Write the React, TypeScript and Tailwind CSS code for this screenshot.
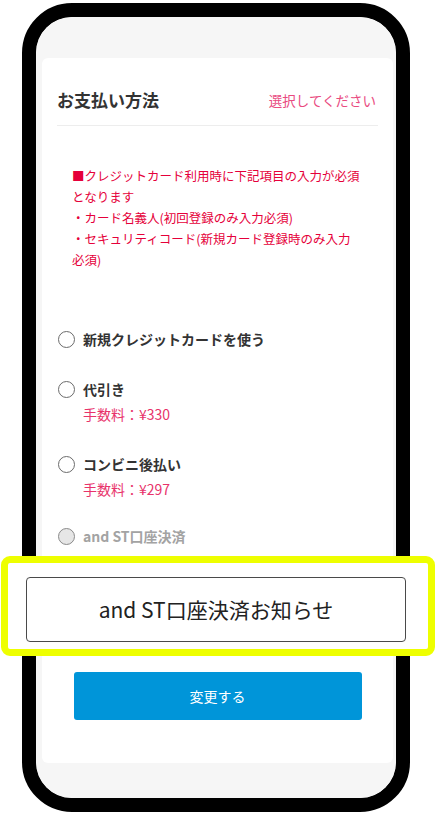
import React from "react";

const jp = { fontFamily: '"Noto Sans CJK JP", "Noto Sans", sans-serif' };

function Radio({ disabled }: { disabled?: boolean }) {
  return (
    <span
      className={`block w-[17px] h-[17px] rounded-full border shrink-0 ${
        disabled ? "border-[#8a8a8a] bg-[#e6e6e6]" : "border-[#6b6b6b] bg-white"
      }`}
    />
  );
}

function Option({ label, fee, disabled, className }: { label: string; fee?: string; disabled?: boolean; className?: string }) {
  return (
    <div className={`flex flex-col ${className ?? ""}`}>
      <div className="flex items-center h-[20px]">
        <div className="w-[25px] flex">
          <Radio disabled={disabled} />
        </div>
        <span
          className={`text-[14px] font-bold leading-[20px] ${disabled ? "text-[#a3a3a3]" : "text-[#333333]"}`}
        >
          {label}
        </span>
      </div>
      {fee && (
        <div className="pl-[25px] mt-[5px] text-[14px] leading-[20px] text-[#e8336b]">{fee}</div>
      )}
    </div>
  );
}

export default function App() {
  return (
    <div className="relative w-[436px] h-[816px] bg-white overflow-hidden" style={jp}>
      <div className="ml-[22px] mt-[3px] w-[388px] h-[809px] rounded-[50px] border-[14px] border-black bg-[#f6f6f6] overflow-hidden">
        <div className="h-full rounded-[36px] overflow-hidden bg-[#f6f6f6] pt-[41px] pl-[6px] pr-[3px]">
          <div className="bg-white rounded-[6px] h-[705px] px-[15px] pt-[31px]">
            <div className="flex items-center justify-between h-[22px]">
              <span className="text-[17px] font-bold text-[#333333]">お支払い方法</span>
              <span className="text-[13.5px] text-[#e94a7f] mr-[2px]">選択してください</span>
            </div>
            <div className="mt-[14px] h-px bg-[#ededed]" />
            <div className="mt-[39px] pl-[15px] pr-[18px] text-[12.5px] leading-[21px] text-[#e5003a]">
              <p>■クレジットカード利用時に下記項目の入力が必須となります</p>
              <p>・カード名義人(初回登録のみ入力必須)</p>
              <p>・セキュリティコード(新規カード登録時のみ入力必須)</p>
            </div>
            <div className="mt-[59px] flex flex-col pl-[1px]">
              <Option label="新規クレジットカードを使う" />
              <Option label="代引き" fee="手数料：¥330" className="mt-[30px]" />
              <Option label="コンビニ後払い" fee="手数料：¥297" className="mt-[30px]" />
              <Option label="and ST口座決済" disabled className="mt-[27px]" />
            </div>
            <div className="mt-[126px] flex justify-center">
              <button className="w-[288px] h-[48px] rounded-[3px] bg-[#0095d9] text-white text-[14px]">
                変更する
              </button>
            </div>
          </div>
        </div>
      </div>
      <div className="absolute left-[1px] top-[556px] w-[434px] h-[100px] rounded-[9px] border-[7px] border-[#eeff00] bg-white pt-[14px] pl-[18px]">
        <div className="w-[380px] h-[65px] rounded-[4px] border-[1.5px] border-[#4a4a4a] flex items-center justify-center text-[21px] text-[#222222]">
          and ST口座決済お知らせ
        </div>
      </div>
    </div>
  );
}
